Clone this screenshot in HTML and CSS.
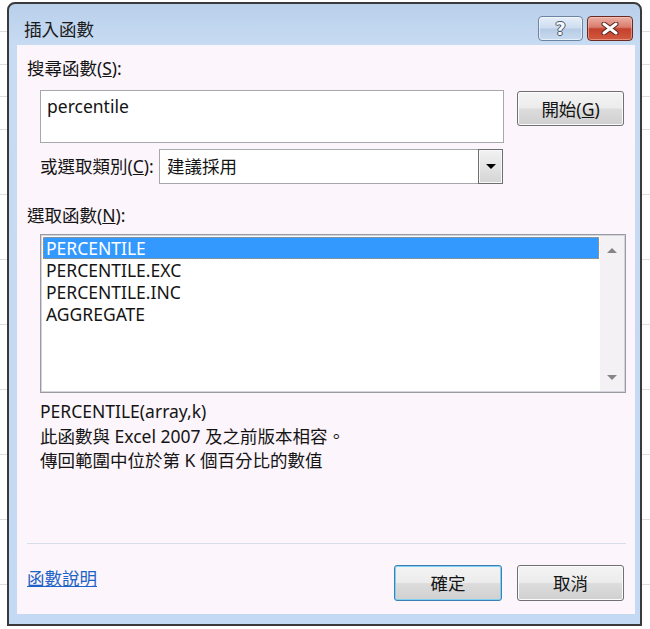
FILE: index.html
```html
<!DOCTYPE html>
<html lang="zh-Hant">
<head>
<meta charset="utf-8">
<title>插入函數</title>
<link rel="stylesheet" href="styles.css">
</head>
<body>
<div class="desk">
  <div class="window">
    <div class="titlebar">
      <span class="title">插入函數</span>
      <div class="caption">
        <div class="cap help"><span class="qmark">?</span></div>
        <div class="cap close">
          <svg width="18" height="13" viewBox="0 0 18 13">
            <path d="M3 2 L15 11 M15 2 L3 11" stroke="#5b211a" stroke-width="5" stroke-linecap="round"/>
            <path d="M3 2 L15 11 M15 2 L3 11" stroke="#ffffff" stroke-width="3" stroke-linecap="round"/>
          </svg>
        </div>
      </div>
    </div>
    <div class="client">
      <div class="label">搜尋函數(<u>S</u>):</div>
      <div class="search-row">
        <div class="textbox">percentile</div>
        <div class="btn go">開始(<u>G</u>)</div>
      </div>
      <div class="cat-row">
        <span class="cat-label">或選取類別(<u>C</u>):</span>
        <div class="combo">
          <span class="combo-text">建議採用</span>
          <div class="drop"><span class="arrow-down"></span></div>
        </div>
      </div>
      <div class="label label2">選取函數(<u>N</u>):</div>
      <div class="listbox">
        <div class="items">
          <div class="item selected">PERCENTILE</div>
          <div class="item">PERCENTILE.EXC</div>
          <div class="item">PERCENTILE.INC</div>
          <div class="item">AGGREGATE</div>
        </div>
        <div class="scroll">
          <span class="sarrow up"></span>
          <span class="sarrow down"></span>
        </div>
      </div>
      <div class="sig">PERCENTILE(array,k)</div>
      <div class="desc">
        <div>此函數與 Excel 2007 及之前版本相容。</div>
        <div>傳回範圍中位於第 K 個百分比的數值</div>
      </div>
      <div class="sep"></div>
      <div class="footer">
        <a class="link" href="#">函數說明</a>
        <div class="btn ok">確定</div>
        <div class="btn cancel">取消</div>
      </div>
    </div>
  </div>
</div>
</body>
</html>
```

FILE: styles.css
```css
* { box-sizing: border-box; }
html, body { margin: 0; padding: 0; }
body {
  width: 650px;
  height: 629px;
  overflow: hidden;
  background: #ffffff;
  font-family: "Noto Sans", "Noto Sans CJK TC", sans-serif;
  font-size: 17.5px;
  color: #141414;
}
.desk {
  width: 650px;
  height: 629px;
  padding: 2px 0 0 7px;
  background: repeating-linear-gradient(to bottom, #ffffff 0, #ffffff 31.5px, #dedede 31.5px, #dedede 32.5px);
}
.window {
  width: 635px;
  height: 624px;
  border: 2px solid #3a3a3a;
  border-radius: 8px 8px 0 0;
  background: linear-gradient(to bottom, #b9cfea 0, #c7dbf2 40px, #c4d9f3 100%);
  display: flex;
  flex-direction: column;
}
.titlebar {
  flex: none;
  height: 41px;
  display: flex;
  align-items: flex-start;
  padding: 0 7px 0 15px;
}
.title {
  margin-top: 14px;
  line-height: 23px;
  color: #1b1b1b;
}
.caption {
  margin-left: auto;
  margin-top: 12px;
  display: flex;
  gap: 4px;
}
.cap {
  height: 25px;
  border-radius: 4px;
  display: flex;
  align-items: center;
  justify-content: center;
}
.help {
  width: 45px;
  border: 1px solid #6c84a3;
  background: linear-gradient(to bottom, #e6eff9 0, #cddcef 48%, #b6cbe5 52%, #c9dbf0 100%);
  box-shadow: inset 0 0 0 1px rgba(255, 255, 255, 0.55);
}
.qmark {
  font-family: "DejaVu Sans", sans-serif;
  font-weight: bold;
  font-size: 18px;
  line-height: 20px;
  color: #f6f8fb;
  text-shadow: 1px 0 0 #46566b, -1px 0 0 #46566b, 0 1px 0 #46566b, 0 -1px 0 #46566b;
}
.close {
  width: 46px;
  border: 1px solid #6a2a22;
  background: linear-gradient(to bottom, #eab0a4 0, #da7c6d 44%, #c4412e 52%, #d2593f 100%);
  box-shadow: inset 0 0 0 1px rgba(255, 215, 205, 0.45);
}
.client {
  flex: 1;
  margin: 0 5px 10px 8px;
  background: #fcf5fb;
  padding: 12px 9px 13px 10px;
  display: flex;
  flex-direction: column;
}
.label {
  line-height: 22px;
  height: 22px;
}
.search-row {
  margin-top: 11px;
  display: flex;
  align-items: flex-start;
  padding-left: 13px;
}
.textbox {
  width: 464px;
  height: 53px;
  background: #ffffff;
  border: 1px solid #a7a7ae;
  padding: 4px 6px;
  line-height: 22px;
}
.btn {
  height: 35px;
  border: 1px solid #707070;
  border-radius: 3px;
  background: linear-gradient(to bottom, #f4f4f4 0, #ececec 48%, #dcdcdc 52%, #d0d0d0 100%);
  box-shadow: inset 0 0 0 1px #fbfbfb;
  display: flex;
  align-items: center;
  justify-content: center;
  line-height: 22px;
}
.go {
  width: 107px;
  margin-left: 13px;
  margin-top: 1px;
}
.cat-row {
  margin-top: 6px;
  display: flex;
  padding-left: 13px;
  height: 35px;
}
.cat-label {
  width: 119px;
  line-height: 35px;
}
.combo {
  width: 344px;
  height: 35px;
  border: 1px solid #a7a7ae;
  background: #ffffff;
  display: flex;
}
.combo-text {
  flex: 1;
  padding-left: 7px;
  line-height: 33px;
}
.drop {
  width: 25px;
  border: 1px solid #6e6e6e;
  margin: -1px -1px -1px 0;
  background: linear-gradient(to bottom, #f2f2f2 0, #e4e4e4 50%, #d4d4d4 100%);
  box-shadow: inset 0 0 0 1px #f8f8f8;
  display: flex;
  align-items: center;
  justify-content: center;
}
.arrow-down {
  width: 0;
  height: 0;
  border-left: 5px solid transparent;
  border-right: 5px solid transparent;
  border-top: 5px solid #000000;
}
.label2 {
  margin-top: 20px;
}
.listbox {
  margin-top: 8px;
  margin-left: 13px;
  width: 586px;
  height: 159px;
  flex: none;
  border: 1px solid #9a9aa2;
  box-shadow: inset 0 0 0 1px #d4d4dc;
  background: #ffffff;
  padding: 1px;
  display: flex;
}
.items {
  flex: 1;
  padding: 1px;
}
.item {
  height: 22px;
  line-height: 22px;
  padding-left: 3px;
  color: #141414;
}
.item.selected {
  background: #3399ff;
  color: #ffffff;
  outline: 1px dotted #c98f4c;
  outline-offset: -1px;
}
.scroll {
  width: 24px;
  background: #f3f1f4;
  display: flex;
  flex-direction: column;
  align-items: center;
  justify-content: space-between;
  padding: 12px 0 11px;
}
.sarrow {
  width: 0;
  height: 0;
  border-left: 5px solid transparent;
  border-right: 5px solid transparent;
}
.sarrow.up { border-bottom: 5px solid #858585; }
.sarrow.down { border-top: 5px solid #858585; }
.sig {
  margin-top: 7px;
  margin-left: 13px;
  line-height: 22px;
}
.desc {
  margin-top: 2px;
  margin-left: 13px;
  line-height: 24px;
}
.sep {
  margin-top: auto;
  height: 1px;
  flex: none;
  background: #d7dee8;
}
.footer {
  margin-top: 21px;
  height: 36px;
  flex: none;
  display: flex;
  align-items: flex-start;
}
.link {
  margin-top: 2px;
  line-height: 22px;
  color: #1c63c7;
  text-decoration: underline;
}
.ok {
  margin-left: auto;
  width: 108px;
  height: 36px;
  border-color: #3c7fb1;
  box-shadow: inset 0 0 0 1px #7fd0f5;
}
.cancel {
  margin-left: 15px;
  margin-right: 2px;
  width: 107px;
  height: 36px;
}
```
